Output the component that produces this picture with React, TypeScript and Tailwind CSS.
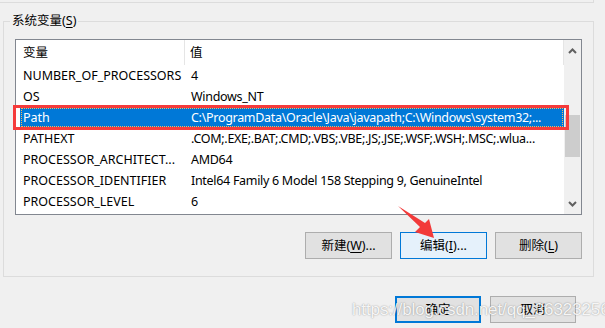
import type { ReactElement, ReactNode } from "react";

type Row = { name: string; value: string; selected?: boolean };

const rows: Row[] = [
  { name: "NUMBER_OF_PROCESSORS", value: "4" },
  { name: "OS", value: "Windows_NT" },
  {
    name: "Path",
    value: "C:\\ProgramData\\Oracle\\Java\\javapath;C:\\Windows\\system32;...",
    selected: true,
  },
  { name: "PATHEXT", value: ".COM;.EXE;.BAT;.CMD;.VBS;.VBE;.JS;.JSE;.WSF;.WSH;.MSC;.wlua..." },
  { name: "PROCESSOR_ARCHITECT...", value: "AMD64" },
  { name: "PROCESSOR_IDENTIFIER", value: "Intel64 Family 6 Model 158 Stepping 9, GenuineIntel" },
  { name: "PROCESSOR_LEVEL", value: "6" },
];

const font = "font-['Noto_Sans','Noto_Sans_CJK_SC',sans-serif]";

export default function App(): ReactElement {
  return (
    <div className={`relative h-[328px] w-[605px] overflow-hidden bg-[#f0f0f0] text-[12.5px] leading-[16px] text-black ${font}`}>
      {/* bottom edge of the group above */}
      <div className="h-[3px] w-[594px] border-b border-r border-[#dcdcdc]" />

      <div className="relative ml-[3px] mt-[18px] h-[256px] w-[591px] border border-[#dcdcdc] px-[11px]">
        <span className="absolute -top-[9px] left-[6px] bg-[#f0f0f0] px-[2px] leading-[16px]">
          系统变量(<span className="underline underline-offset-2">S</span>)
        </span>

        <div className="mt-[17px] flex h-[176px] w-[567px] border border-[#828790] bg-white">
          <div className="min-w-0 flex-1">
            <div className="flex h-[25px] items-center">
              <div className="flex h-full w-[169px] items-center border-r border-[#e5e5e5] pl-[7px]">变量</div>
              <div className="flex h-full flex-1 items-center border-r border-[#e5e5e5] pl-[5px]">值</div>
            </div>
            {rows.map((row) => (
              <div
                key={row.name}
                className={
                  row.selected
                    ? "relative ml-[4px] flex h-[21px] items-center bg-[#0078d7] text-white"
                    : "ml-[4px] flex h-[21px] items-center"
                }
              >
                {row.selected ? (
                  <>
                    <div className="pointer-events-none absolute inset-[1px] border border-dotted border-[#f7b660]" />
                    <div className="pointer-events-none absolute -bottom-[2px] -left-[7px] -right-[5px] -top-[2px] z-10 border-[3px] border-[#f53b3b]" />
                  </>
                ) : null}
                <div className="w-[165px] shrink-0 overflow-hidden whitespace-nowrap pl-[3px]">{row.name}</div>
                <div className="min-w-0 flex-1 overflow-hidden whitespace-nowrap pl-[6px] tracking-[-0.3px]">
                  {row.value}
                </div>
              </div>
            ))}
          </div>

          <div className="flex w-[17px] flex-col items-center bg-[#f0f0f0]">
            <svg className="mt-[8px]" width="9" height="6" viewBox="0 0 9 6">
              <path d="M1 5 L4.5 1.5 L8 5" fill="none" stroke="#606060" strokeWidth="2" />
            </svg>
            <div className="mt-[61px] h-[42px] w-[15px] bg-[#cdcdcd]" />
            <div className="flex-1" />
            <svg className="mb-[7px]" width="9" height="6" viewBox="0 0 9 6">
              <path d="M1 1 L4.5 4.5 L8 1" fill="none" stroke="#606060" strokeWidth="2" />
            </svg>
          </div>
        </div>

        <div className="mt-[17px] flex justify-end gap-[8px]">
          <WinButton>
            新建(<span className="underline underline-offset-2">W</span>)...
          </WinButton>
          <WinButton hover>
            编辑(<span className="underline underline-offset-2">I</span>)...
          </WinButton>
          <WinButton>
            删除(<span className="underline underline-offset-2">L</span>)
          </WinButton>
        </div>
      </div>

      <div className="mr-[29px] mt-[19px] flex justify-end gap-[9px]">
        <button className="flex h-[27px] w-[86px] items-center justify-center border-2 border-[#0078d7] bg-[#e1e1e1]">
          确定
        </button>
        <button className="flex h-[27px] w-[86px] items-center justify-center border border-[#adadad] bg-[#e1e1e1]">
          取消
        </button>
      </div>

      {/* annotation arrow */}
      <svg className="absolute left-[390px] top-[200px]" width="50" height="45" viewBox="390 200 50 45">
        <polygon points="398,206 425,223 429,219 434,238 415,232 420,227" fill="#f23a3a" />
      </svg>

      {/* watermark */}
      <div className="pointer-events-none absolute left-[352px] top-[300px] font-['Liberation_Sans',sans-serif] text-[17px] leading-[20px] tracking-[-0.1px] text-white/90 [text-shadow:0_0_1.5px_rgba(0,0,0,0.45)]">
        https://blog.csdn.net/qq_36323256
      </div>
    </div>
  );
}

function WinButton({ children, hover }: { children: ReactNode; hover?: boolean }): ReactElement {
  return (
    <button
      className={
        hover
          ? "flex h-[27px] w-[87px] items-center justify-center border border-[#0078d7] bg-[#e5f1fb]"
          : "flex h-[27px] w-[87px] items-center justify-center border border-[#adadad] bg-[#e1e1e1]"
      }
    >
      {children}
    </button>
  );
}
